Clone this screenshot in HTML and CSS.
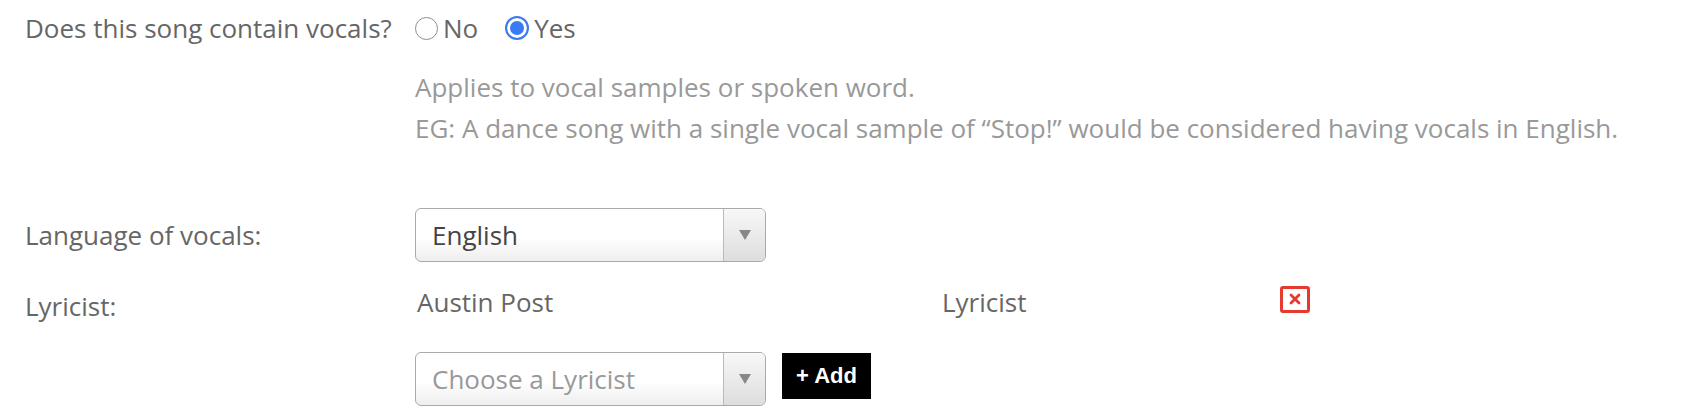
FILE: index.html
```html
<!DOCTYPE html>
<html lang="en">
<head>
  <meta charset="utf-8">
  <title>Vocals</title>
  <link rel="stylesheet" href="styles.css">
</head>
<body>
  <div class="form">
    <div class="row vocals">
      <div class="label">Does this song contain vocals?</div>
      <div class="value">
        <label class="radio"><span class="dot"></span>No</label>
        <label class="radio"><span class="dot checked"></span>Yes</label>
      </div>
    </div>

    <div class="row help">
      <div></div>
      <div class="value">
        <p>Applies to vocal samples or spoken word.</p>
        <p>EG: A dance song with a single vocal sample of “Stop!” would be considered having vocals in English.</p>
      </div>
    </div>

    <div class="row lang">
      <div class="label">Language of vocals:</div>
      <div class="value">
        <div class="select"><span class="text">English</span><span class="arrow"></span></div>
      </div>
    </div>

    <div class="row lyricist">
      <div class="label low">Lyricist:</div>
      <div class="value credit">
        <span class="name">Austin Post</span>
        <span class="role">Lyricist</span>
        <span class="remove">
          <svg width="12" height="12" viewBox="0 0 12 12"><path d="M2 2L10 10M10 2L2 10" stroke="#e63a2e" stroke-width="2.8" stroke-linecap="round"/></svg>
        </span>
      </div>
    </div>

    <div class="row add-row">
      <div></div>
      <div class="value adder">
        <div class="select"><span class="text placeholder">Choose a Lyricist</span><span class="arrow"></span></div>
        <button class="add">+ Add</button>
      </div>
    </div>
  </div>
</body>
</html>
```

FILE: styles.css
```css
* { margin: 0; padding: 0; box-sizing: border-box; }
body {
  font-family: "Open Sans", sans-serif;
  font-size: 26px; color: #666; background: #fff;
  padding: 0 0 0 25px;
}
.row { display: grid; grid-template-columns: 390px auto; align-items: center; }
.label { color: #666; }
.label.low { padding-top: 8px; }

.vocals { height: 56px; }
.vocals .value { display: flex; align-items: center; gap: 27px; }
.radio { display: flex; align-items: center; gap: 5px; color: #666; }
.dot {
  width: 23px; height: 23px; border-radius: 50%;
  border: 1.5px solid #8e8e8e; background: #fff;
}
.dot.checked {
  width: 24px; height: 24px;
  border: 2px solid #3a7af2;
  box-shadow: inset 0 0 0 3px #fff, inset 0 0 0 12px #3a7af2;
}

.help { padding-top: 11px; color: #999; }
.help p { line-height: 41px; }

.lang { margin-top: 59px; }
.select {
  width: 351px; height: 54px; display: flex; align-items: stretch;
  border: 1.5px solid #aaa; border-radius: 6px;
  background: linear-gradient(#fff 55%, #eee);
  overflow: hidden;
}
.select .text { flex: 1; display: flex; align-items: center; padding-left: 16px; color: #444; }
.select .placeholder { color: #999; }
.select .arrow {
  width: 42px; border-left: 1.5px solid #bbb;
  background: linear-gradient(#f7f7f7, #ddd);
  display: flex; align-items: center; justify-content: center;
}
.select .arrow::after {
  content: ""; border-left: 6px solid transparent; border-right: 6px solid transparent;
  border-top: 10px solid #888;
}

.lyricist { margin-top: 10px; height: 60px; }
.credit { display: flex; align-items: center; }
.credit .name { width: 527px; padding-left: 2px; color: #666; }
.credit .role { width: 338px; color: #666; }
.remove {
  width: 30px; height: 27px; border: 3px solid #e63a2e; border-radius: 3px;
  display: flex; align-items: center; justify-content: center;
  margin-top: -6px;
}

.add-row { margin-top: 20px; }
.adder { display: flex; align-items: center; gap: 16px; }
.add {
  background: #000; color: #fff; border: none;
  font-family: "Liberation Sans", Arial, sans-serif; font-weight: 700;
  font-size: 22px; height: 46px; padding: 0 14px; margin-top: -6px;
}
```
